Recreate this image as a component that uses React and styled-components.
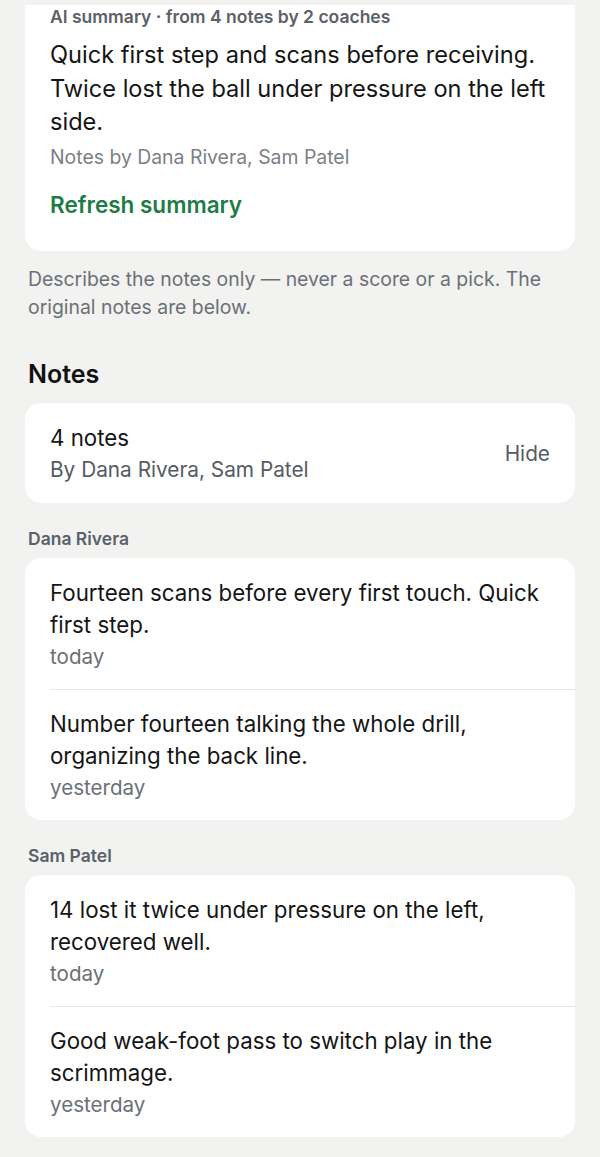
import styled, { createGlobalStyle } from "styled-components";

const GlobalStyle = createGlobalStyle`
  body {
    margin: 0;
    background: #f2f2f1;
    font-family: Inter, "Noto Sans", sans-serif;
    -webkit-font-smoothing: antialiased;
  }
`;

const notesByCoach = [
  {
    coach: "Dana Rivera",
    notes: [
      { text: "Fourteen scans before every first touch. Quick first step.", when: "today" },
      { text: "Number fourteen talking the whole drill, organizing the back line.", when: "yesterday" },
    ],
  },
  {
    coach: "Sam Patel",
    notes: [
      { text: "14 lost it twice under pressure on the left, recovered well.", when: "today" },
      { text: "Good weak-foot pass to switch play in the scrimmage.", when: "yesterday" },
    ],
  },
];

const App = () => {
  return (
    <>
      <GlobalStyle />
      <Page>
        <SummaryCard>
          <Eyebrow>AI summary · from 4 notes by 2 coaches</Eyebrow>
          <SummaryText>
            Quick first step and scans before receiving. Twice lost the ball under pressure on the left side.
          </SummaryText>
          <Meta>Notes by Dana Rivera, Sam Patel</Meta>
          <GreenLink>Refresh summary</GreenLink>
        </SummaryCard>

        <Disclaimer>Describes the notes only — never a score or a pick. The original notes are below.</Disclaimer>

        <Heading>Notes</Heading>

        <Card>
          <CountRow>
            <div>
              <NoteText>4 notes</NoteText>
              <Byline>By Dana Rivera, Sam Patel</Byline>
            </div>
            <HideBtn>Hide</HideBtn>
          </CountRow>
        </Card>

        {notesByCoach.map((group) => (
          <Group key={group.coach}>
            <CoachLabel>{group.coach}</CoachLabel>
            <Card>
              {group.notes.map((n, i) => (
                <NoteItem key={i} $first={i === 0}>
                  <NoteText>{n.text}</NoteText>
                  <When>{n.when}</When>
                </NoteItem>
              ))}
            </Card>
          </Group>
        ))}
      </Page>
    </>
  );
};

const Page = styled.div`
  display: flex;
  flex-direction: column;
  padding: 5px 25px 19px;
  width: 600px;
  box-sizing: border-box;
`;

const Card = styled.div`
  background: #ffffff;
  border-radius: 16px;
  overflow: hidden;
`;

const SummaryCard = styled(Card)`
  border-radius: 0 0 16px 16px;
  padding: 1px 25px 32px;
`;

const Eyebrow = styled.div`
  font-size: 17.5px;
  line-height: 22px;
  font-weight: 600;
  color: #5b6168;
`;

const SummaryText = styled.p`
  margin: 10px 0 0;
  font-size: 23.6px;
  line-height: 33.5px;
  color: #151515;
`;

const Meta = styled.div`
  margin-top: 5px;
  font-size: 19.4px;
  line-height: 26px;
  color: #7a7f86;
`;

const GreenLink = styled.button`
  margin-top: 21px;
  padding: 0;
  border: 0;
  background: none;
  text-align: left;
  font-family: inherit;
  font-size: 22.5px;
  line-height: 28px;
  font-weight: 600;
  color: #1d7c45;
`;

const Disclaimer = styled.p`
  margin: 14px 3px 0;
  font-size: 19.4px;
  line-height: 28px;
  color: #6b7076;
`;

const Heading = styled.h2`
  margin: 39px 3px 15px;
  font-size: 25px;
  line-height: 28px;
  font-weight: 600;
  color: #111;
`;

const CountRow = styled.div`
  display: flex;
  align-items: center;
  justify-content: space-between;
  padding: 19px 25px 17px;
`;

const Byline = styled.div`
  font-size: 20.8px;
  line-height: 32px;
  color: #555b62;
`;

const HideBtn = styled.button`
  padding: 0;
  border: 0;
  background: none;
  font-family: inherit;
  font-size: 20.8px;
  color: #555b62;
`;

const Group = styled.div`
  display: flex;
  flex-direction: column;
  margin-top: 26px;
`;

const CoachLabel = styled.div`
  margin: 0 3px 9px;
  font-size: 17.5px;
  line-height: 20px;
  font-weight: 600;
  color: #5b6168;
`;

const NoteItem = styled.div`
  margin-left: 25px;
  padding: 18px 25px 16px 0;
  border-top: ${(p) => (p.$first ? "none" : "1px solid #e6e6e6")};
  padding-top: ${(p) => (p.$first ? "19px" : "18px")};
`;

const NoteText = styled.div`
  font-size: 22.3px;
  line-height: 32px;
  color: #151515;
`;

const When = styled.div`
  font-size: 20.6px;
  line-height: 32px;
  color: #6b7076;
`;

export default App;
